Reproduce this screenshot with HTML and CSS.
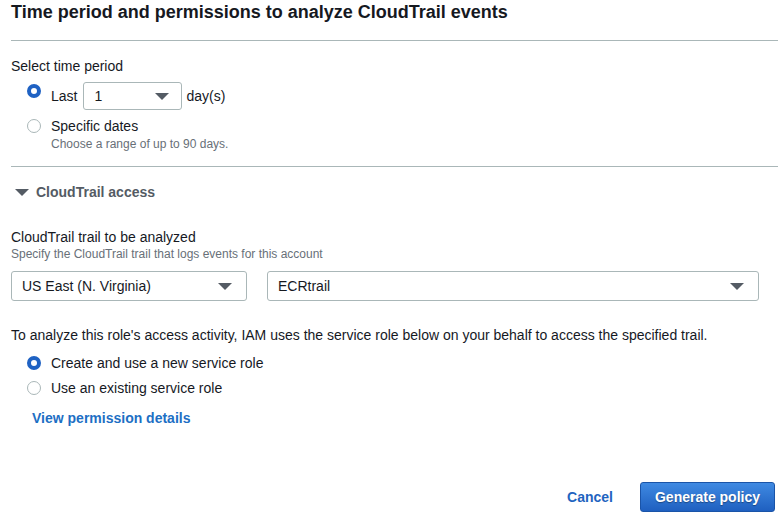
FILE: index.html
```html
<!DOCTYPE html>
<html lang="en">
<head>
<meta charset="utf-8">
<title>Time period and permissions</title>
<link rel="stylesheet" href="styles.css">
</head>
<body>
<div class="panel">
  <div class="header">
    <h2 class="title">Time period and permissions to analyze CloudTrail events</h2>
  </div>

  <div class="section time">
    <div class="label">Select time period</div>
    <div class="radio-row first">
      <span class="radio checked"></span>
      <span class="opt-text">Last</span>
      <div class="select small"><span>1</span><span class="caret"></span></div>
      <span class="opt-text days">day(s)</span>
    </div>
    <div class="radio-row second">
      <span class="radio"></span>
      <div class="opt-col">
        <span class="opt-text">Specific dates</span>
        <span class="desc">Choose a range of up to 90 days.</span>
      </div>
    </div>
  </div>

  <div class="section access">
    <div class="expander">
      <span class="tri"></span>
      <span class="exp-title">CloudTrail access</span>
    </div>

    <div class="label trail-label">CloudTrail trail to be analyzed</div>
    <div class="desc">Specify the CloudTrail trail that logs events for this account</div>

    <div class="selects">
      <div class="select region"><span>US East (N. Virginia)</span><span class="caret"></span></div>
      <div class="select trail"><span>ECRtrail</span><span class="caret"></span></div>
    </div>

    <div class="label info">To analyze this role's access activity, IAM uses the service role below on your behalf to access the specified trail.</div>
    <div class="roles">
      <div class="radio-row role">
        <span class="radio checked"></span>
        <span class="opt-text">Create and use a new service role</span>
      </div>
      <div class="radio-row role">
        <span class="radio"></span>
        <span class="opt-text">Use an existing service role</span>
      </div>
    </div>
    <a class="link" href="#">View permission details</a>
  </div>

  <div class="footer">
    <a class="cancel" href="#">Cancel</a>
    <button class="primary" type="button">Generate policy</button>
  </div>
</div>
</body>
</html>
```

FILE: styles.css
```css
* { box-sizing: border-box; }

body {
  margin: 0;
  background: #ffffff;
  font-family: "Liberation Sans", Arial, Helvetica, sans-serif;
  color: #16191f;
  font-size: 14px;
}

.panel {
  width: 782px;
  height: 520px;
  padding: 0 4px 0 11px;
  display: flex;
  flex-direction: column;
}

.header {
  padding-top: 1px;
  padding-bottom: 17px;
  border-bottom: 1px solid #aab7b8;
}

.title {
  margin: 0;
  font-size: 18px;
  line-height: 22px;
  font-weight: 700;
  color: #16191f;
}

.section.time {
  padding-top: 15px;
  padding-bottom: 14px;
  border-bottom: 1px solid #aab7b8;
}

.label {
  line-height: 20px;
  font-size: 14px;
}

.desc {
  display: block;
  font-size: 12px;
  line-height: 16px;
  color: #687078;
}

.radio-row {
  display: flex;
  align-items: center;
  padding-left: 16px;
}

.radio {
  flex: none;
  width: 14px;
  height: 14px;
  border-radius: 50%;
  border: 1px solid #aab7b8;
  background: #fff;
  margin-right: 10px;
}

.radio.checked {
  border: 4.5px solid #1f62c3;
}

.radio-row.first {
  margin-top: 6px;
  height: 28px;
}

.radio-row.first .radio {
  align-self: flex-start;
  margin-top: 2px;
}

.radio-row.second {
  margin-top: 6px;
  align-items: flex-start;
}

.radio-row.second .radio {
  margin-top: 3px;
}

.opt-col {
  display: flex;
  flex-direction: column;
}

.opt-text {
  line-height: 20px;
}

.days {
  margin-left: 4px;
}

.select {
  display: flex;
  align-items: center;
  justify-content: space-between;
  border: 1px solid #aab7b8;
  border-radius: 3px;
  background: #fff;
  padding: 0 14px 0 10px;
  line-height: 20px;
}

.select.small {
  width: 99px;
  height: 28px;
  margin-left: 6px;
  padding-right: 12px;
}

.caret {
  width: 0;
  height: 0;
  border-left: 7px solid transparent;
  border-right: 7px solid transparent;
  border-top: 7px solid #545b64;
}

.section.access {
  padding-top: 15px;
}

.expander {
  display: flex;
  align-items: center;
  line-height: 20px;
  padding-left: 4px;
}

.tri {
  width: 0;
  height: 0;
  border-left: 7px solid transparent;
  border-right: 7px solid transparent;
  border-top: 7px solid #545b64;
  margin-right: 7px;
}

.exp-title {
  font-weight: 700;
  color: #545b64;
}

.trail-label {
  margin-top: 26px;
  line-height: 18px;
}

.selects {
  display: flex;
  gap: 20px;
  margin-top: 9px;
}

.select.region {
  width: 236px;
  height: 30px;
}

.select.trail {
  width: 492px;
  height: 30px;
}

.info {
  margin-top: 24px;
}

.roles {
  margin-top: 5px;
}

.radio-row.role {
  height: 25px;
}

.link {
  display: block;
  margin-top: 8px;
  margin-left: 21px;
  line-height: 20px;
  font-weight: 700;
  color: #1d6fc4;
  text-decoration: none;
}

.footer {
  margin-top: auto;
  margin-bottom: 8px;
  margin-right: 3px;
  display: flex;
  justify-content: flex-end;
  align-items: center;
  gap: 27px;
}

.cancel {
  font-weight: 700;
  color: #1f64c0;
  text-decoration: none;
  line-height: 20px;
}

.primary {
  height: 30px;
  width: 135px;
  padding: 0;
  border: 1px solid #1a54a8;
  border-radius: 3px;
  background: linear-gradient(#3f8ae2, #1f60c0);
  color: #fff;
  font-family: inherit;
  font-size: 14px;
  font-weight: 700;
  text-shadow: 0 1px 1px rgba(0, 0, 0, 0.35);
}
```
